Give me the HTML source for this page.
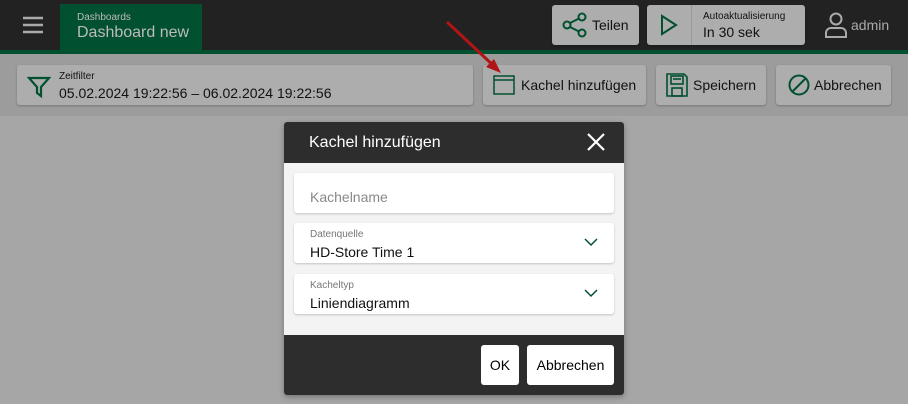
<!DOCTYPE html><html><head><style>
*{box-sizing:border-box;margin:0;padding:0}
body{width:908px;height:404px;overflow:hidden;background:#a6a6a6;font-family:"Liberation Sans",sans-serif;position:relative}
.abs{position:absolute}
.btn{position:absolute;background:#adadad;border-radius:3px;box-shadow:0 1px 2px rgba(0,0,0,.25);color:#111;font-size:14px;display:flex;align-items:center}
.field{position:absolute;left:10px;width:320px;background:#fff;border-radius:3px;box-shadow:0 1px 2px rgba(0,0,0,.2)}
</style></head><body>
<div class="abs" style="left:0;top:0;width:908px;height:50px;background:#222"></div>
<div class="abs" style="left:0;top:50px;width:908px;height:4px;background:#01502f"></div>
<div class="abs" style="left:0;top:54px;width:908px;height:62px;background:#9c9c9c"></div>
<svg class="abs" style="left:22px;top:16px" width="22" height="18"><g stroke="#aaa" stroke-width="2.5"><line x1="1" y1="2" x2="21" y2="2"/><line x1="1" y1="9" x2="21" y2="9"/><line x1="1" y1="16" x2="21" y2="16"/></g></svg>
<div class="abs" style="left:60px;top:4px;width:142px;height:46px;background:#01502f"></div>
<div class="abs" style="left:77px;top:12px;font-size:10px;color:#bbb">Dashboards</div>
<div class="abs" style="left:77px;top:24px;font-size:16px;color:#bbb">Dashboard new</div>
<div class="btn" style="left:552px;top:5px;width:87px;height:40px"><svg style="margin:0 4px 0 10px" width="26" height="26" viewBox="0 0 26 26" fill="none" stroke="#01502f" stroke-width="2"><circle cx="5" cy="13" r="3.5"/><circle cx="20" cy="5" r="3.5"/><circle cx="20" cy="21" r="3.5"/><line x1="8" y1="11" x2="17" y2="6.5"/><line x1="8" y1="15" x2="17" y2="19.5"/></svg>Teilen</div>
<div class="btn" style="left:647px;top:5px;width:158px;height:40px"><svg style="margin-left:13px" width="18" height="22" viewBox="0 0 18 22" fill="none" stroke="#01502f" stroke-width="2"><path d="M2 2 L16 11 L2 20Z"/></svg><div class="abs" style="left:44px;top:0;width:1px;height:40px;background:#999"></div><div class="abs" style="left:56px;top:6px;font-size:10px">Autoaktualisierung</div><div class="abs" style="left:56px;top:19px;font-size:14px">In 30 sek</div></div>
<svg class="abs" style="left:824px;top:12px" width="24" height="26" viewBox="0 0 24 26" fill="none" stroke="#aaa" stroke-width="2"><circle cx="12" cy="7" r="5.5"/><path d="M2 25v-4a5 5 0 0 1 5-5h10a5 5 0 0 1 5 5v4Z"/></svg>
<div class="abs" style="left:851px;top:17px;font-size:14px;color:#aaa">admin</div>
<div class="btn" style="left:17px;top:65px;width:456px;height:40px"><svg class="abs" style="left:10px;top:10px" width="24" height="24" viewBox="0 0 24 24" fill="none" stroke="#01502f" stroke-width="2.2"><path d="M2 3h20l-8 9v9l-4-3v-6Z"/></svg><div class="abs" style="left:42px;top:6px;font-size:10px">Zeitfilter</div><div class="abs" style="left:42px;top:20px;font-size:14px">05.02.2024 19:22:56 – 06.02.2024 19:22:56</div></div>
<div class="btn" style="left:483px;top:65px;width:163px;height:40px"><svg style="margin:0 6px 0 10px" width="22" height="20" viewBox="0 0 22 20" fill="none" stroke="#01502f" stroke-width="1.5"><rect x="1" y="1" width="20" height="18"/><line x1="1" y1="5" x2="21" y2="5"/></svg>Kachel hinzufügen</div>
<div class="btn" style="left:656px;top:65px;width:110px;height:40px"><svg style="margin:0 5px 0 10px" width="22" height="24" viewBox="0 0 22 24" fill="none" stroke="#01502f" stroke-width="1.6"><path d="M1 1h17l3 3v19H1Z"/><rect x="5" y="3" width="12" height="8"/><line x1="7" y1="6" x2="15" y2="6"/><rect x="6" y="15" width="10" height="8"/></svg>Speichern</div>
<div class="btn" style="left:776px;top:65px;width:115px;height:40px"><svg style="margin:0 4px 0 12px" width="22" height="22" viewBox="0 0 22 22" fill="none" stroke="#01502f" stroke-width="2"><circle cx="11" cy="11" r="9.5"/><line x1="4.5" y1="17.5" x2="17.5" y2="4.5"/></svg>Abbrechen</div>
<svg class="abs" style="left:440px;top:15px" width="70" height="65"><line x1="7" y1="7" x2="56" y2="53" stroke="#b01515" stroke-width="3"/><path d="M61 58 L46 52 L54 44Z" fill="#b01515"/></svg>
<div class="abs" style="left:284px;top:122px;width:340px;height:273px;background:#f3f3f3;border-radius:3px;overflow:hidden;box-shadow:0 2px 6px rgba(0,0,0,.3)">
<div class="abs" style="left:0;top:0;width:340px;height:41px;background:#2d2d2d"></div>
<div class="abs" style="left:25px;top:12px;font-size:16px;color:#fff">Kachel hinzufügen</div>
<svg class="abs" style="left:302px;top:10px" width="20" height="20"><g stroke="#fff" stroke-width="2.2"><line x1="2" y1="2" x2="18" y2="18"/><line x1="18" y1="2" x2="2" y2="18"/></g></svg>
<div class="field" style="top:51px;height:40px"><div class="abs" style="left:16px;top:16px;font-size:14px;color:#888">Kachelname</div></div>
<div class="field" style="top:101px;height:40px"><div class="abs" style="left:16px;top:6px;font-size:10px;color:#777">Datenquelle</div><div class="abs" style="left:16px;top:21px;font-size:14px;color:#111">HD-Store Time 1</div><svg class="abs" style="left:290px;top:15px" width="14" height="9"><path d="M1 1l6 6 6-6" fill="none" stroke="#01502f" stroke-width="1.5"/></svg></div>
<div class="field" style="top:152px;height:40px"><div class="abs" style="left:16px;top:6px;font-size:10px;color:#777">Kacheltyp</div><div class="abs" style="left:16px;top:21px;font-size:14px;color:#111">Liniendiagramm</div><svg class="abs" style="left:290px;top:15px" width="14" height="9"><path d="M1 1l6 6 6-6" fill="none" stroke="#01502f" stroke-width="1.5"/></svg></div>
<div class="abs" style="left:0;top:213px;width:340px;height:60px;background:#2d2d2d"></div>
<div class="abs" style="left:197px;top:223px;width:38px;height:40px;background:#fff;border-radius:3px;font-size:14px;display:flex;align-items:center;justify-content:center">OK</div>
<div class="abs" style="left:243px;top:223px;width:87px;height:40px;background:#fff;border-radius:3px;font-size:14px;display:flex;align-items:center;justify-content:center">Abbrechen</div>
</div>
</body></html>
